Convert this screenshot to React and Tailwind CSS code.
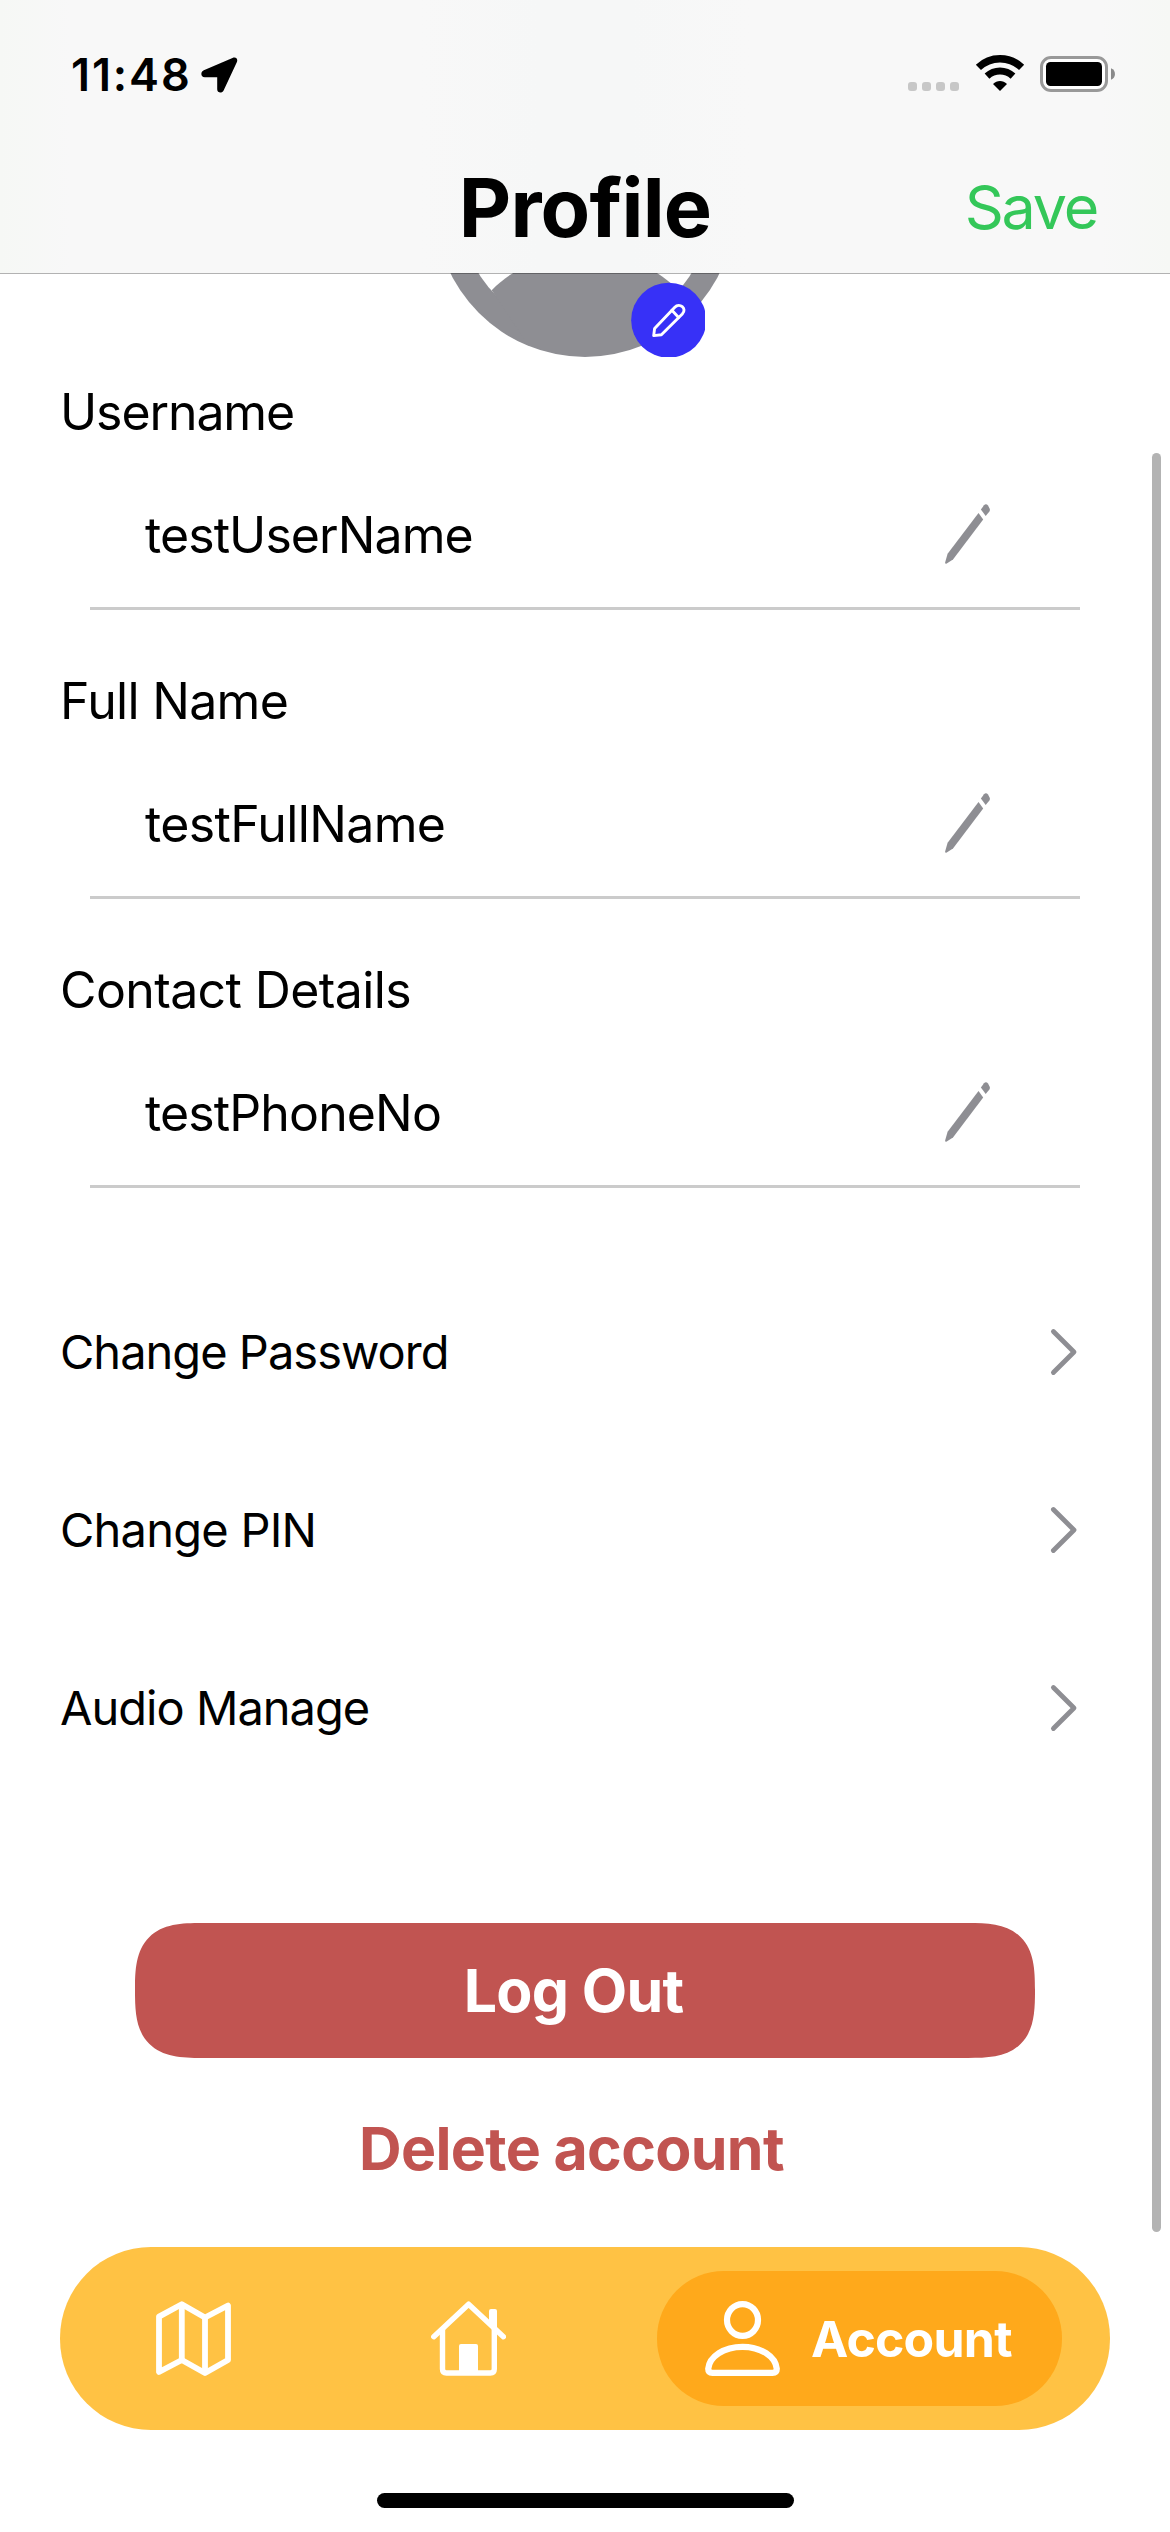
import React from "react";

function StatusBar() {
  return (
    <div className="flex h-[134px] items-start justify-between pl-[71px] pr-[54px]">
      <div className="flex items-start">
        <span className="mt-[47px] w-[130px] text-[45px] font-semibold leading-[55px] tracking-[1.9px]">11:48</span>
        <svg className="mt-[56px]" width="38" height="38" viewBox="0 0 38 38">
          <path d="M2.8 14.2 31.5 1.9C34.9 .4 37.3 2.9 35.8 6.2L22.6 34.4C21 37.6 16.2 37 16.2 33.2V21.2H3.8C-.4 21.2-.8 15.8 2.8 14.2Z" fill="#000" />
        </svg>
      </div>
      <div className="flex items-start">
        <div className="mt-[82px] flex gap-[5px]">
          <i className="size-[9px] rounded-[3px] bg-[#c7c7c7]" />
          <i className="size-[9px] rounded-[3px] bg-[#c7c7c7]" />
          <i className="size-[9px] rounded-[3px] bg-[#c7c7c7]" />
          <i className="size-[9px] rounded-[3px] bg-[#c7c7c7]" />
        </div>
        <svg className="ml-[16px] mt-[55px]" width="50" height="36" viewBox="0 0 50 36">
          <path d="M3.4 12.4C15.4.8 34.6.8 46.6 12.4" fill="none" stroke="#000" strokeWidth="7.4" />
          <path d="M12 21.2C19.4 14.4 30.6 14.4 38 21.2" fill="none" stroke="#000" strokeWidth="7" />
          <path d="M18 29C22 24.9 28 24.9 32 29L25 36Z" fill="#000" />
        </svg>
        <svg className="ml-[15px] mt-[56px]" width="76" height="36" viewBox="0 0 76 36">
          <rect x="1.5" y="1.5" width="65" height="33" rx="9.5" fill="#fff" stroke="#999" strokeWidth="3" />
          <rect x="6" y="6" width="56" height="24" rx="4.5" fill="#000" />
          <path d="M71 12.3C76.300 14 76.300 22 71 23.700Z" fill="#8a8a8a" />
        </svg>
      </div>
    </div>
  );
}

function Header() {
  return (
    <header className="relative z-10 h-[274px] border-b border-black/30 bg-[#f8f8f8] bg-[linear-gradient(to_right,#f6f8f5_0px,#f8f8f8_70px,#f8f8f8_420px,#f6f7f7_540px,#f6f7f7_630px,#f8f8f8_750px,#f8f8f8_1100px,#f6f8f5_1170px)] bg-clip-padding">
      <StatusBar />
      <div className="grid grid-cols-3 items-start">
        <span />
        <h1 className="mt-[25px] text-center text-[81px] font-bold leading-[98px] tracking-[-0.83px]">Profile</h1>
        <button className="mt-[36px] justify-self-end pr-[73px] text-[61px] leading-[74px] tracking-[-2.2px] text-[#34c759]">Save</button>
      </div>
    </header>
  );
}

function Avatar() {
  return (
    <div className="relative mx-auto -mt-[217px] h-[300px] w-[300px]">
      <svg width="300" height="300" viewBox="435 57 300 300">
        <circle cx="585" cy="207" r="150" fill="#8e8e93" />
        <circle cx="585" cy="207" r="125.400" fill="#fff" />
        <path d="M491.700 290.300C515 266 550 253 585 253S655 266 678.300 290.300L645 340H525Z" fill="#8e8e93" />
        <circle cx="585" cy="180" r="52" fill="#8e8e93" />
      </svg>
      <svg className="absolute bottom-0 right-[30px]" width="74" height="75" viewBox="631 282 74 75">
        <circle cx="668.700" cy="320.200" r="37.500" fill="#3731f7" />
        <g fill="none" stroke="#fff" strokeWidth="2.900" strokeLinejoin="round" strokeLinecap="round">
          <path d="M653.700 335.600 654.600 328.400 674.800 307.200C679.400 302.300 687.600 308.400 682.300 314L661.400 334.800Z" />
          <path d="M671.900 310.300 678.600 317.400" />
        </g>
      </svg>
    </div>
  );
}

function Pencil() {
  return (
    <svg className="-mt-px" width="46" height="61" viewBox="45 64 46 61" fill="#8e8e93">
      <path d="M45.200 122.200 47.600 113.800 78.500 73 83.200 79.400 53 119.400 46.300 123.700Q44.800 124 45.200 122.200Z" />
      <path d="M80.900 69.600 84 65.300Q86 63 88 65.500L89.600 68.400Q90.300 70 89.400 71.600L85.700 76.100Z" />
    </svg>
  );
}

function Field({ label, labelClass, value, valueClass }) {
  return (
    <section className="h-[228px]">
      <div className={`h-[123px] pl-[60px] text-[50px] leading-[60px] ${labelClass}`}>{label}</div>
      <div className="ml-[90px] mr-[90px] flex h-[105px] items-start justify-between border-b-[3px] border-[#cbcbcb] pl-[55px] pr-[89px]">
        <span className={`text-[50px] leading-[60px] ${valueClass}`}>{value}</span>
        <Pencil />
      </div>
    </section>
  );
}

function LinkRow({ label, textClass }) {
  return (
    <div className="flex h-[178px] items-center justify-between pl-[60px] pr-[92px]">
      <span className={`pb-[2px] text-[47px] leading-[57px] ${textClass}`}>{label}</span>
      <svg width="28" height="48" viewBox="0 0 28 48">
        <path d="M3.400 3.500 24 24 3.400 44.500" fill="none" stroke="#8e8e93" strokeWidth="4.800" strokeLinecap="round" strokeLinejoin="round" />
      </svg>
    </div>
  );
}

function TabBar() {
  return (
    <nav className="mx-[60px] flex h-[183px] items-center rounded-[91px] bg-[#ffc244] pl-[96px] pr-[48px] text-white">
      <svg width="75" height="76" viewBox="156 2301 75 76" fill="none" stroke="currentColor" strokeWidth="5.800" strokeLinejoin="round">
        <path d="M159 2316.600 181.800 2304.200 205 2317.500 228 2305.500V2360L205 2373 181.800 2360 159 2372Z" />
        <path d="M181.800 2304.200V2360M205 2317.500V2373" />
      </svg>
      <svg className="ml-[200px]" width="75" height="76" viewBox="431 2301 75 76" fill="none" stroke="currentColor">
        <path d="M433.800 2336.700 468.600 2304.200 503.400 2336.700" strokeWidth="5.400" strokeLinecap="round" strokeLinejoin="round" />
        <path d="M442.500 2329V2369Q442.500 2373 446.500 2373H490.300Q494.300 2373 494.300 2369V2329" strokeWidth="5.400" />
        <rect x="459" y="2344" width="19" height="30" rx="2" fill="currentColor" stroke="none" />
        <path d="M489 2322V2311Q489 2309 491 2309H495Q497 2309 497 2311V2330Z" fill="currentColor" stroke="none" />
      </svg>
      <div className="ml-auto flex h-[135px] w-[405px] items-center rounded-[67px] bg-[#ffa91b] pl-[48px]">
        <svg width="75" height="76" viewBox="705 2301 75 76" fill="none" stroke="currentColor" strokeWidth="6.200" strokeLinejoin="round">
          <ellipse cx="742.500" cy="2320" rx="15.500" ry="15.900" />
          <path d="M712.500 2372.800C709.500 2372.800 708.200 2371.300 708.200 2368.800C709.500 2356.500 724 2346.800 742.500 2346.800S775.500 2356.500 776.800 2368.800C776.800 2371.300 775.500 2372.800 772.500 2372.800Z" />
        </svg>
        <span className="ml-[31px] text-[50px] font-bold leading-[60px] tracking-[-0.8px]">Account</span>
      </div>
    </nav>
  );
}

export default function App() {
  return (
    <div className="relative h-[2532px] w-[1170px] overflow-hidden bg-white font-['Inter',sans-serif] text-black">
      <Header />
      <main>
        <Avatar />
        <div className="mt-[25px] flex flex-col gap-[61px]">
          <Field label="Username" labelClass="tracking-[-1.1px]" value="testUserName" valueClass="tracking-[-0.92px]" />
          <Field label="Full Name" labelClass="tracking-[-0.69px]" value="testFullName" valueClass="tracking-[-0.65px]" />
          <Field label="Contact Details" labelClass="tracking-[-0.62px]" value="testPhoneNo" valueClass="tracking-[-0.87px]" />
        </div>
        <div className="mt-[75px]">
          <LinkRow label="Change Password" textClass="tracking-[-0.98px]" />
          <LinkRow label="Change PIN" textClass="tracking-[-0.75px]" />
          <LinkRow label="Audio Manage" textClass="tracking-[-0.98px]" />
        </div>
        <button className="mx-auto mt-[126px] block h-[135px] w-[900px] rounded-[48px] bg-[#c15451] pr-[23px] text-[59px] font-bold leading-[133px] tracking-[-0.7px] text-white supports-[corner-shape:squircle]:rounded-[67px] supports-[corner-shape:squircle]:[corner-shape:superellipse(1.54)]">
          Log Out
        </button>
        <button className="ml-[359px] mt-[55px] block text-[59px] font-bold leading-[71px] tracking-[-0.65px] text-[#c15451]">
          Delete account
        </button>
      </main>
      <div className="mt-[63px]">
        <TabBar />
      </div>
      <div className="ml-[377px] mt-[63px] h-[15px] w-[417px] rounded-full bg-black" />
      <div className="absolute right-[9px] top-[453px] h-[1779px] w-[9px] rounded-full bg-[#b3b3b3]" />
    </div>
  );
}
